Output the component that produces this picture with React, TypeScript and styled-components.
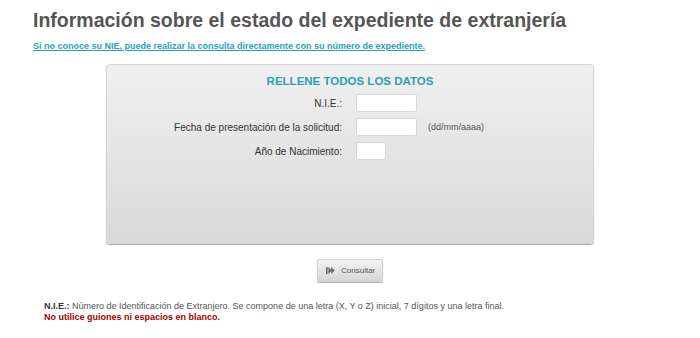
import React from 'react';
import styled, { createGlobalStyle } from 'styled-components';

const GlobalStyle = createGlobalStyle`
  html, body {
    margin: 0;
    padding: 0;
    background: #ffffff;
    font-family: "Liberation Sans", Arial, sans-serif;
  }
`;

const Page = styled.div`
  width: 700px;
  padding: 8px 0 0 0;
  box-sizing: border-box;
`;

const Title = styled.h1`
  margin: 0 0 0 33px;
  font-size: 19.5px;
  line-height: 24px;
  font-weight: bold;
  color: #555555;
`;

const HelpLink = styled.a`
  display: block;
  margin: 9px 0 0 33px;
  font-size: 9px;
  font-weight: bold;
  color: #2a9fbd;
  text-decoration: underline;
`;

const Panel = styled.form`
  width: 488px;
  height: 180px;
  margin: 13px auto 0;
  box-sizing: border-box;
  border: 1px solid #d6d6d6;
  border-radius: 4px;
  background: linear-gradient(#f0f0f0, #d9d9d9);
  box-shadow: 0 1px 1px rgba(0, 0, 0, 0.35);
  padding-top: 9px;
`;

const PanelTitle = styled.div`
  text-align: center;
  font-size: 11.5px;
  font-weight: bold;
  color: #2aa0b8;
  line-height: 14px;
  margin-bottom: 6px;
`;

const Row = styled.div`
  display: flex;
  align-items: center;
  height: 18px;
  margin-bottom: 6px;
`;

const Label = styled.label`
  width: 235px;
  margin-right: 14px;
  text-align: right;
  font-size: 10px;
  color: #333333;
`;

const Field = styled.input<{ $w: number }>`
  width: ${(p) => p.$w}px;
  height: 18px;
  box-sizing: border-box;
  border: 1px solid #d8d8d8;
  border-radius: 2px;
  background: #ffffff;
  padding: 0 3px;
  margin: 0;
`;

const Hint = styled.span`
  font-size: 9px;
  color: #555555;
  margin-left: 11px;
`;

const Actions = styled.div`
  display: flex;
  justify-content: center;
  margin-top: 15px;
`;

const Button = styled.button`
  display: flex;
  align-items: center;
  gap: 6px;
  width: 66px;
  height: 23px;
  padding: 0 0 0 8px;
  border: 1px solid #cfcfcf;
  border-radius: 2px;
  background: linear-gradient(#f4f4f4, #d6d6d6);
  box-shadow: 0 1px 1px rgba(0, 0, 0, 0.3);
  font-family: "Liberation Sans", Arial, sans-serif;
  font-size: 8px;
  color: #555555;
`;

const Notes = styled.div`
  margin: 19px 0 0 44px;
  font-size: 9px;
  line-height: 11px;
  color: #555555;
`;

const Strong = styled.b`
  color: #333333;
`;

const Warning = styled.div`
  font-weight: bold;
  color: #a00000;
`;

const FastIcon = () => (
  <svg width="9" height="7" viewBox="0 0 9 7">
    <rect x="0" y="0" width="1.6" height="7" fill="#666" />
    <path d="M2.4 0 L5.8 3.5 L2.4 7 Z" fill="#666" />
    <path d="M5.2 0 L8.6 3.5 L5.2 7 Z" fill="#666" />
  </svg>
);

export default function App() {
  return (
    <Page>
      <GlobalStyle />
      <Title>Información sobre el estado del expediente de extranjería</Title>
      <HelpLink href="#">
        Si no conoce su NIE, puede realizar la consulta directamente con su número de expediente.
      </HelpLink>
      <Panel>
        <PanelTitle>RELLENE TODOS LOS DATOS</PanelTitle>
        <Row>
          <Label>N.I.E.:</Label>
          <Field $w={61} />
        </Row>
        <Row>
          <Label>Fecha de presentación de la solicitud:</Label>
          <Field $w={61} />
          <Hint>(dd/mm/aaaa)</Hint>
        </Row>
        <Row>
          <Label>Año de Nacimiento:</Label>
          <Field $w={30} />
        </Row>
      </Panel>
      <Actions>
        <Button type="button">
          <FastIcon />
          Consultar
        </Button>
      </Actions>
      <Notes>
        <Strong>N.I.E.:</Strong> Número de Identificación de Extranjero. Se compone de una letra (X, Y o Z) inicial, 7 dígitos y una letra final.
        <Warning>No utilice guiones ni espacios en blanco.</Warning>
      </Notes>
    </Page>
  );
}
